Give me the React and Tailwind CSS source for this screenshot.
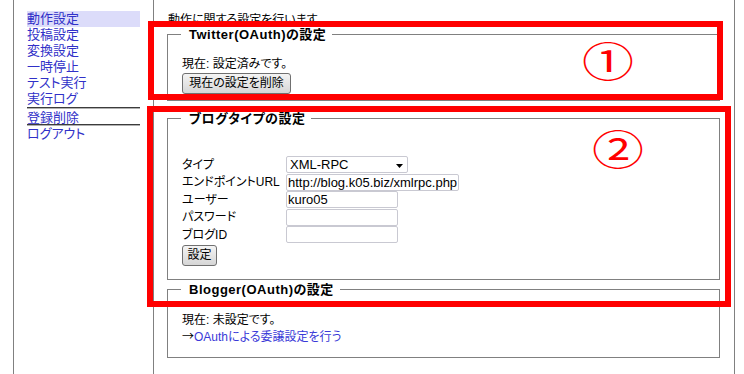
import React from "react";

const menu = ["動作設定", "投稿設定", "変換設定", "一時停止", "テスト実行", "実行ログ"];

function Legend({ children }) {
  return (
    <legend className="ml-[-1px] pl-[8px] pr-[6px] text-[13px] font-bold leading-[15px] tracking-[0.5px]">
      {children}
    </legend>
  );
}

function OldButton({ w, children }) {
  return (
    <button className={`${w} h-[21px] rounded-[3px] border border-[#707070] bg-gradient-to-b from-[#f4f4f4] to-[#d6d6d6] text-[12px] leading-[19px] text-black`}>
      {children}
    </button>
  );
}

function Field({ h, label, children }) {
  return (
    <div className={`flex items-center ${h}`}>
      <span className="w-[104px] shrink-0 whitespace-nowrap leading-[16px]">{label}</span>
      {children}
    </div>
  );
}

function TextBox({ w, value }) {
  return (
    <input
      readOnly
      defaultValue={value}
      className={`${w} h-[17px] rounded-[2px] border border-[#c9c9d2] bg-white px-[1px] text-[13px] leading-[15px] outline-none`}
    />
  );
}

export default function App() {
  return (
    <div className="relative h-[374px] w-[744px] overflow-hidden bg-white font-['Liberation_Sans','Noto_Sans_CJK_JP',sans-serif] text-[12px] text-black [font-feature-settings:'palt']">
      <div className="ml-[13px] flex h-full border-l border-[#808080]">
        {/* side menu */}
        <nav className="w-[139px] px-[13px] pt-[11px] text-[13px] leading-[16px] text-[#3030c8]">
          {menu.map((m, i) => (
            <div key={m} className={i === 0 ? "h-[16px] bg-[#dcdcfa]" : "h-[16px]"}>
              {m}
            </div>
          ))}
          <div className="border-t border-b border-t-[#3c3c3c] border-b-[#b0b0b0]" />
          <div className="h-[15px] pt-[1px] leading-[15px]">登録削除</div>
          <div className="border-t border-b border-t-[#3c3c3c] border-b-[#b0b0b0]" />
          <div className="leading-[16px]">ログアウト</div>
        </nav>

        {/* main */}
        <main className="h-full w-[582px] border-x border-[#808080] pl-[13px] pr-[14px] pt-[9px]">
          <p className="mt-[3px] pl-px leading-[16px]">動作に関する設定を行います</p>

          <fieldset className="mt-[-1px] border border-[#808080] px-[14px] pb-[6px]">
            <Legend>Twitter(OAuth)の設定</Legend>
            <p className="pt-[14px] leading-[16px]">現在: 設定済みです。</p>
            <div className="mt-px">
              <OldButton w="w-[109px]">現在の設定を削除</OldButton>
            </div>
          </fieldset>

          <fieldset className="mt-[10px] border border-[#808080] px-[14px] pb-[13px]">
            <Legend>ブログタイプの設定</Legend>
            <div className="pt-[30px]">
              <Field h="h-[17px]" label="タイプ">
                <div className="flex h-[17px] w-[122px] items-center justify-between rounded-[2px] border border-[#c9c9d2] bg-white pl-[3px] pr-[4px] font-['Liberation_Sans',sans-serif] text-[13px]">
                  <span className="leading-[15px]">XML-RPC</span>
                  <svg width="7" height="4" viewBox="0 0 7 4" className="mt-[2px]">
                    <path d="M0 0h7L3.5 4z" fill="#000" />
                  </svg>
                </div>
              </Field>
              <Field h="h-[18px]" label="エンドポイントURL">
                <TextBox w="w-[173px]" value="http://blog.k05.biz/xmlrpc.php" />
              </Field>
              <Field h="h-[17px]" label="ユーザー">
                <TextBox w="w-[112px]" value="kuro05" />
              </Field>
              <Field h="h-[18px]" label="パスワード">
                <TextBox w="w-[112px]" value="" />
              </Field>
              <Field h="h-[17px]" label="ブログID">
                <TextBox w="w-[112px]" value="" />
              </Field>
            </div>
            <div className="mt-[2px]">
              <OldButton w="w-[35px]">設定</OldButton>
            </div>
          </fieldset>

          <fieldset className="mt-[2px] border border-[#808080] px-[14px] pb-[12px]">
            <Legend>Blogger(OAuth)の設定</Legend>
            <p className="pt-[15px] leading-[16px]">現在: 未設定です。</p>
            <p className="leading-[16px]">
              <span className="font-['Noto_Sans_CJK_JP',sans-serif] [font-feature-settings:normal]">→</span>
              <a href="#" className="text-[#3a3ad8]">OAuthによる委譲設定を行う</a>
            </p>
          </fieldset>
        </main>
      </div>

      {/* red annotations */}
      <div className="absolute left-[148px] top-[21px] h-[79px] w-[575px] border-[6px] border-[#ff0000]" />
      <div className="absolute left-[147px] top-[106px] h-[201px] w-[584px] border-[6px] border-[#ff0000]" />
      <span className="absolute left-[582px] top-[40px] origin-top scale-y-[0.78] font-['Noto_Sans_CJK_JP',sans-serif] text-[52px] leading-[52px] text-[#ff0000]">
        ①
      </span>
      <span className="absolute left-[592px] top-[128px] origin-top scale-y-[0.78] font-['Noto_Sans_CJK_JP',sans-serif] text-[52px] leading-[52px] text-[#ff0000]">
        ②
      </span>
    </div>
  );
}
